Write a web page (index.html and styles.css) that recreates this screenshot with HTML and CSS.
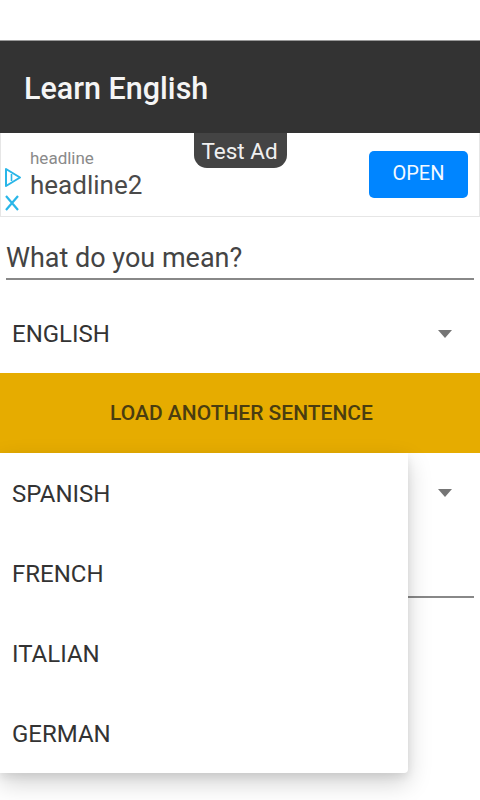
FILE: index.html
```html
<!DOCTYPE html>
<html>
<head>
    <title>Learn English</title>
    <link rel="stylesheet" href="styles.css">
</head>
<body>
    <div class="status-space"></div>
    <header class="app-bar">Learn English</header>

    <div class="ad">
        <div class="ad-icons">
            <svg width="18" height="21" viewBox="0 0 18 21">
                <path d="M2 2 L16 10.5 L2 19 Z" fill="none" stroke="#29b6e8" stroke-width="2" stroke-linejoin="round"/>
                <path d="M7.5 7 L7.5 14" fill="none" stroke="#29b6e8" stroke-width="1.6"/>
            </svg>
            <svg width="16" height="16" viewBox="0 0 16 16">
                <path d="M2 1 L14 15 M14 1 L2 15" stroke="#29b6e8" stroke-width="2.2"/>
            </svg>
        </div>
        <div class="ad-text">
            <div class="ad-small">headline</div>
            <div class="ad-big">headline2</div>
        </div>
        <button class="ad-open">OPEN</button>
        <div class="ad-badge">Test Ad</div>
    </div>

    <div class="question">What do you mean?</div>

    <div class="select select-top">
        <span>ENGLISH</span>
        <span class="arrow"></span>
    </div>

    <button class="load-btn">LOAD ANOTHER SENTENCE</button>

    <div class="lower">
        <div class="select select-low">
            <span></span>
            <span class="arrow"></span>
        </div>
        <div class="answer"></div>

        <ul class="menu">
            <li>SPANISH</li>
            <li>FRENCH</li>
            <li>ITALIAN</li>
            <li>GERMAN</li>
        </ul>
    </div>
</body>
</html>
```

FILE: styles.css
```css
html, body {
    height: 100%;
}

body {
    margin: 0;
    background-color: #fff;
    font-family: Roboto, 'Noto Sans', sans-serif;
    color: #333;
    overflow: hidden;
}

.status-space {
    height: 40px;
}

.app-bar {
    height: 93px;
    box-sizing: border-box;
    padding: 30px 24px 0;
    background-color: #333;
    border-top: 1px solid #999;
    color: #f5f5f5;
    font-size: 30.5px;
    font-weight: 500;
    line-height: 36px;
}

/* banner */
.ad {
    position: relative;
    height: 84px;
    box-sizing: border-box;
    display: flex;
    align-items: center;
    border: 1px solid #e6e6e6;
    border-top: none;
    padding-right: 11px;
}

.ad-icons {
    width: 29px;
    display: flex;
    flex-direction: column;
    align-items: flex-start;
    gap: 7px;
    padding: 29px 0 0 3px;
    box-sizing: border-box;
}

.ad-text {
    flex: 1;
    padding-top: 1px;
}

.ad-small {
    font-size: 17px;
    line-height: 20px;
    color: #8a8a8a;
}

.ad-big {
    font-size: 26px;
    line-height: 34px;
    color: #4a4a4a;
}

.ad-open {
    width: 99px;
    height: 47px;
    border: none;
    border-radius: 5px;
    background-color: #0085ff;
    color: #f4f9ff;
    font-family: Roboto, sans-serif;
    font-size: 20px;
    padding: 0 0 3px;
}

.ad-badge {
    position: absolute;
    top: 0;
    left: 193px;
    width: 93px;
    height: 35px;
    box-sizing: border-box;
    padding-right: 2px;
    border-radius: 0 0 13px 13px;
    background-color: #444;
    color: #f0f0f0;
    font-size: 22.5px;
    line-height: 36px;
    text-align: center;
}

.question {
    height: 63px;
    box-sizing: border-box;
    margin: 0 6px;
    padding-top: 21px;
    border-bottom: 2px solid #888;
    font-size: 27px;
    line-height: 40px;
    color: #444;
}

.select {
    box-sizing: border-box;
    padding: 0 28px 0 12px;
    display: flex;
    align-items: center;
    justify-content: space-between;
    font-size: 24px;
    color: #333;
}

.select-top {
    height: 93px;
    padding-top: 15px;
}

.arrow {
    width: 0;
    height: 0;
    border-left: 7.5px solid transparent;
    border-right: 7.5px solid transparent;
    border-top: 8px solid #757575;
}

.load-btn {
    display: block;
    width: 100%;
    height: 80px;
    border: none;
    padding: 0 0 0 3px;
    background-color: #e6ac00;
    color: #4a3d10;
    font-family: Roboto, sans-serif;
    font-size: 21px;
    font-weight: 500;
}

.lower {
    position: relative;
}

.select-low {
    height: 80px;
}

.answer {
    margin: 0 6px;
    height: 63px;
    border-bottom: 2px solid #888;
}

/* open dropdown, sits over the form */
.menu {
    position: absolute;
    top: 0;
    left: 0;
    width: 408px;
    margin: 0;
    padding: 0;
    list-style: none;
    background-color: #fff;
    border-radius: 0 0 4px 0;
    box-shadow: 0 10px 24px rgba(0, 0, 0, 0.18), 0 4px 8px rgba(0, 0, 0, 0.08);
}

.menu li {
    height: 80px;
    padding-left: 12px;
    line-height: 83px;
    font-size: 24px;
    color: #333;
}
```
